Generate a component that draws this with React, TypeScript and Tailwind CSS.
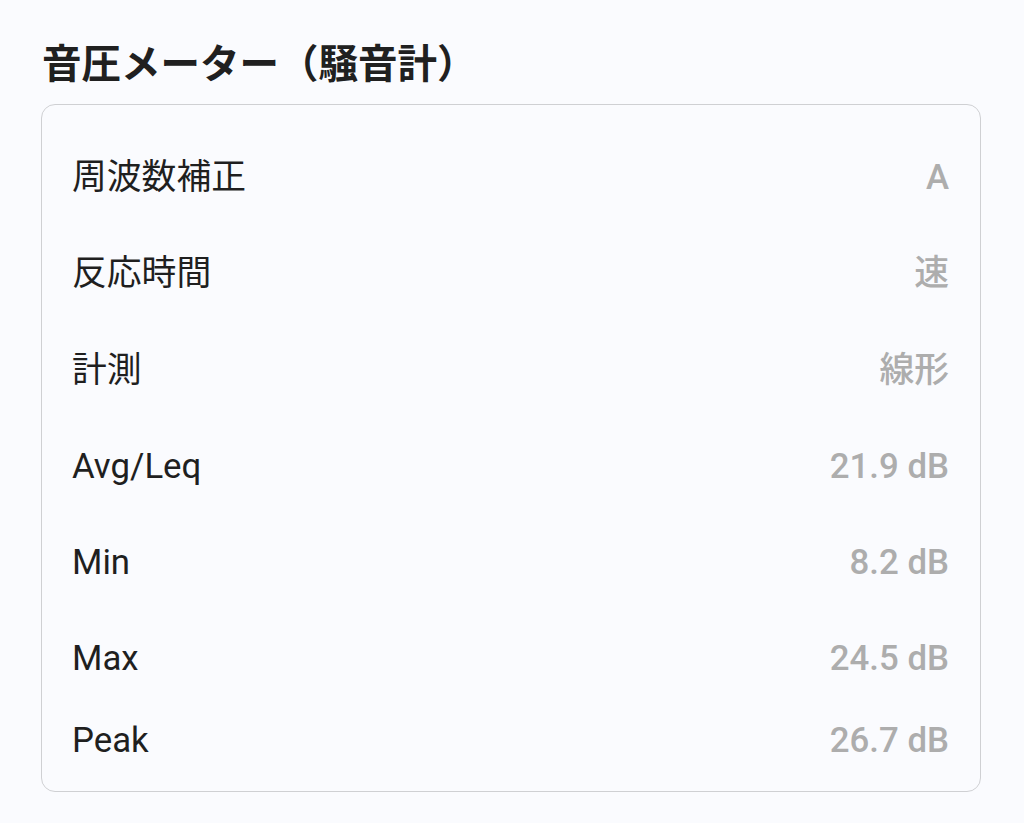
import React from "react";

const rows: { label: string; value: string; h: string }[] = [
  { label: "周波数補正", value: "A", h: "h-[96.3px]" },
  { label: "反応時間", value: "速", h: "h-[96.3px]" },
  { label: "計測", value: "線形", h: "h-[96.3px]" },
  { label: "Avg/Leq", value: "21.9 dB", h: "h-[96.3px]" },
  { label: "Min", value: "8.2 dB", h: "h-[96.3px]" },
  { label: "Max", value: "24.5 dB", h: "h-[96.3px]" },
  { label: "Peak", value: "26.7 dB", h: "h-[66.7px]" },
];

export default function App() {
  return (
    <div
      className="w-[1024px] h-[823px] bg-[#fafbfe] overflow-hidden"
      style={{ fontFamily: "Roboto, 'Noto Sans CJK JP', sans-serif" }}
    >
      <div className="pl-[41px] pr-[43px] pt-[41px]">
        <h1 className="text-[39.5px] leading-[48px] font-bold text-[#202020] pl-[1px]">
          音圧メーター（騒音計）
        </h1>
        <div className="mt-[15px] border border-[#cfd0d3] rounded-[14px] pt-[23.85px] pb-[17.65px] pl-[30px] pr-[31px]">
          {rows.map((r) => (
            <div key={r.label} className={`flex items-center justify-between ${r.h}`}>
              <span className="text-[34.8px] leading-[40px] text-[#1f1f1f]">{r.label}</span>
              <span className="text-[34.8px] leading-[40px] font-medium text-[#adadad]">{r.value}</span>
            </div>
          ))}
        </div>
      </div>
    </div>
  );
}
